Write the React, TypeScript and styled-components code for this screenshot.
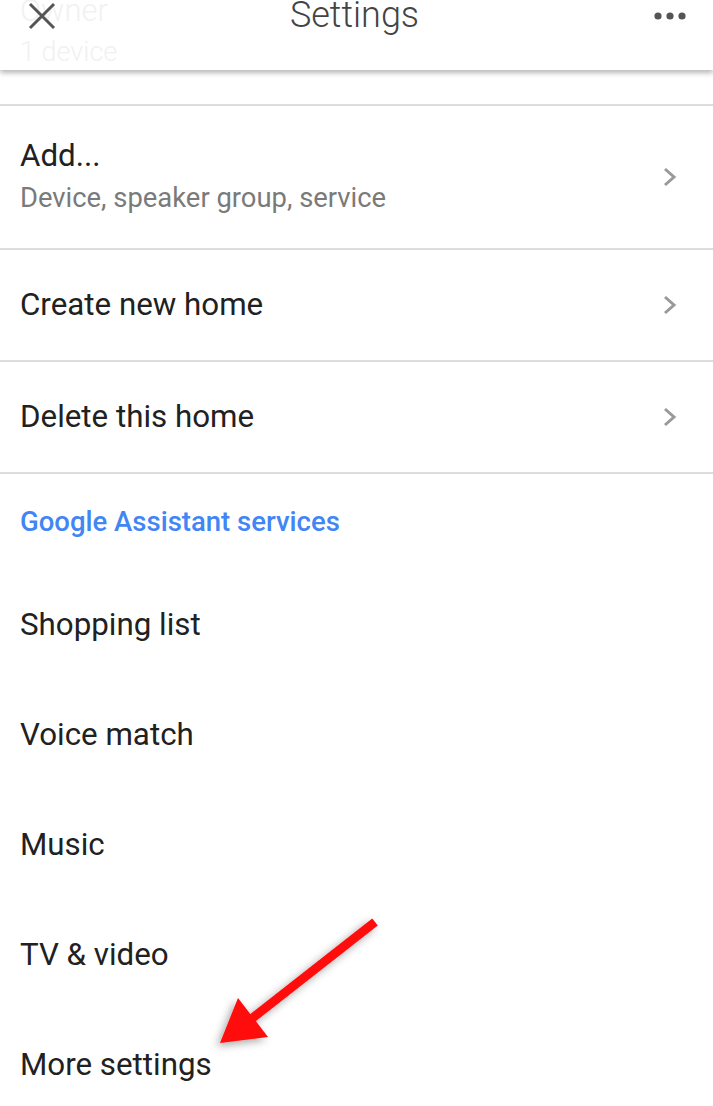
import styled, { createGlobalStyle } from "styled-components";

const GlobalStyle = createGlobalStyle`
  html, body {
    margin: 0;
    padding: 0;
    background: #ffffff;
  }
  body {
    font-family: Roboto, "Liberation Sans", sans-serif;
  }
`;

const Page = styled.div`
  position: relative;
  width: 713px;
  height: 1106px;
  overflow: hidden;
  background: #ffffff;
`;

const TopBar = styled.header`
  position: relative;
  height: 70px;
  display: flex;
  align-items: flex-start;
  justify-content: space-between;
  padding: 0 26px 0 28px;
  background: #ffffff;
  box-shadow: 0 3px 5px rgba(0, 0, 0, 0.28);
  z-index: 2;
`;

const GhostText = styled.div`
  position: absolute;
  left: 20px;
  top: -10px;
  color: #f1f1f1;
  font-size: 31px;
  font-weight: 300;
  line-height: 42px;
  pointer-events: none;

  span {
    display: block;
    font-size: 27px;
    line-height: 40px;
  }
`;

const IconButton = styled.div`
  position: relative;
  height: 32px;
  display: flex;
  align-items: center;
`;

const Title = styled.h1`
  margin: 0;
  margin-top: -10px;
  font-size: 36px;
  font-weight: 300;
  color: #444444;
  line-height: 50px;
`;

const Divider = styled.div<{ $top?: number }>`
  height: 2px;
  background: #dddddd;
  margin-top: ${(p) => p.$top ?? 0}px;
`;

const Row = styled.div<{ $height: number }>`
  height: ${(p) => p.$height}px;
  display: flex;
  align-items: center;
  justify-content: space-between;
  padding: 0 34px 0 20px;
`;

const RowText = styled.div`
  display: flex;
  flex-direction: column;
  gap: 4px;
  margin-top: -2px;
`;

const Label = styled.div`
  font-size: 31.3px;
  color: #212121;
  line-height: 40px;
`;

const SubLabel = styled.div`
  font-size: 27.4px;
  color: #7a7a7a;
  line-height: 36px;
`;

const SectionTitle = styled.div`
  height: 96px;
  display: flex;
  align-items: center;
  padding: 0 20px 2px;
  box-sizing: border-box;
  font-size: 27.5px;
  font-weight: 500;
  color: #4285f4;
`;

const Chevron = () => (
  <svg width="18" height="22" viewBox="0 0 18 22">
    <path d="M4 3 L13 11 L4 19" fill="none" stroke="#999999" strokeWidth="3" />
  </svg>
);

const CloseIcon = () => (
  <svg width="28" height="28" viewBox="0 0 28 28">
    <path d="M2 2 L26 26 M26 2 L2 26" stroke="#555555" strokeWidth="3" />
  </svg>
);

const MoreIcon = () => (
  <svg width="34" height="10" viewBox="0 0 34 10">
    <circle cx="5" cy="5" r="3.6" fill="#555555" />
    <circle cx="17" cy="5" r="3.6" fill="#555555" />
    <circle cx="29" cy="5" r="3.6" fill="#555555" />
  </svg>
);

const ArrowOverlay = styled.svg`
  position: absolute;
  left: 200px;
  top: 900px;
  width: 200px;
  height: 170px;
  overflow: visible;
`;

const settingsItems = ["Shopping list", "Voice match", "Music", "TV & video", "More settings"];

export default function App() {
  return (
    <Page>
      <GlobalStyle />
      <TopBar>
        <GhostText>
          Owner
          <span>1 device</span>
        </GhostText>
        <IconButton>
          <CloseIcon />
        </IconButton>
        <Title>Settings</Title>
        <IconButton>
          <MoreIcon />
        </IconButton>
      </TopBar>
      <Divider $top={34} />
      <Row $height={142}>
        <RowText>
          <Label>Add...</Label>
          <SubLabel>Device, speaker group, service</SubLabel>
        </RowText>
        <Chevron />
      </Row>
      <Divider />
      <Row $height={110}>
        <Label>Create new home</Label>
        <Chevron />
      </Row>
      <Divider />
      <Row $height={110}>
        <Label>Delete this home</Label>
        <Chevron />
      </Row>
      <Divider />
      <SectionTitle>Google Assistant services</SectionTitle>
      {settingsItems.map((item) => (
        <Row key={item} $height={110}>
          <Label>{item}</Label>
        </Row>
      ))}
      <ArrowOverlay viewBox="200 900 200 170">
        <defs>
          <filter id="arrowShadow" x="-30%" y="-30%" width="160%" height="160%">
            <feDropShadow dx="-3" dy="3" stdDeviation="4" floodColor="#000000" floodOpacity="0.35" />
          </filter>
        </defs>
        <g filter="url(#arrowShadow)">
          <line x1="375" y1="922" x2="250" y2="1020" stroke="#ff0a0a" strokeWidth="9" />
          <polygon points="238,998 268,1037 220,1043" fill="#ff0a0a" />
        </g>
      </ArrowOverlay>
    </Page>
  );
}
